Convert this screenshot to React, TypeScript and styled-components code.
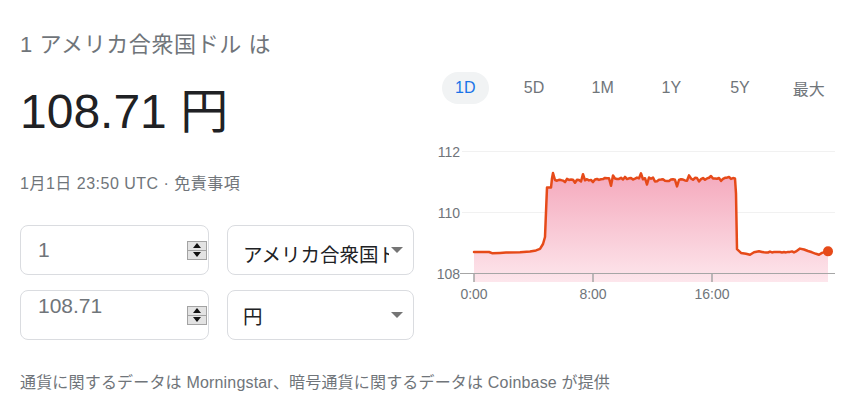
import React from "react";
import styled, { createGlobalStyle } from "styled-components";

const FONT = `"Liberation Sans", Arial, "Noto Sans CJK JP", sans-serif`;

const GlobalStyle = createGlobalStyle`
  html, body { margin: 0; padding: 0; background: #fff; }
  body { font-family: ${FONT}; }
`;

const Page = styled.div`
  width: 850px;
  height: 417px;
  box-sizing: border-box;
  padding: 30px 7px 0 20px;
  display: flex;
  flex-direction: column;
  font-family: ${FONT};
`;

const Title = styled.div`
  font-size: 22px;
  letter-spacing: 0.6px;
  line-height: 30px;
  height: 30px;
  color: #70757a;
  white-space: nowrap;
`;

const Main = styled.div`
  display: flex;
  gap: 17px;
`;

const LeftCol = styled.div`
  width: 394px;
  display: flex;
  flex-direction: column;
`;

const BigValue = styled.div`
  margin-top: 20px;
  font-size: 48px;
  line-height: 64px;
  height: 64px;
  color: #202124;
  white-space: nowrap;
`;

const Meta = styled.div`
  margin-top: 28px;
  font-size: 16px;
  letter-spacing: 0.5px;
  line-height: 24px;
  height: 24px;
  color: #70757a;
  white-space: nowrap;
`;

const Converter = styled.div`
  margin-top: 29px;
  display: grid;
  grid-template-columns: 189px 187px;
  grid-auto-rows: 50px;
  column-gap: 18px;
  row-gap: 15px;
`;

const NumberBox = styled.div`
  box-sizing: border-box;
  height: 50px;
  border: 1px solid #dadce0;
  border-radius: 8px;
  display: flex;
  align-items: center;
  padding: 0 1px 0 17px;
`;

const NumberInput = styled.input<{ $lift: number }>`
  flex: 1;
  min-width: 0;
  border: none;
  outline: none;
  background: transparent;
  padding: 0 0 ${(p) => p.$lift}px 0;
  margin: 0;
  font-family: ${FONT};
  font-size: 21px;
  line-height: 24px;
  color: #70757a;
`;

const Spinner = styled.div`
  box-sizing: border-box;
  width: 20px;
  height: 19px;
  border: 1px solid #a3a3a3;
  background: #e3e3e3;
  display: flex;
  flex-direction: column;
`;

const SpinHalf = styled.div`
  flex: 1;
  display: flex;
  align-items: center;
  justify-content: center;
  & + & {
    border-top: 1px solid #a3a3a3;
  }
`;

const Arrow = styled.span<{ $down?: boolean }>`
  width: 0;
  height: 0;
  border-left: 4.5px solid transparent;
  border-right: 4.5px solid transparent;
  ${(p) =>
    p.$down
      ? "border-top: 5px solid #111;"
      : "border-bottom: 5px solid #111;"}
`;

const SelectBox = styled.div`
  box-sizing: border-box;
  height: 50px;
  border: 1px solid #dadce0;
  border-radius: 8px;
  display: flex;
  align-items: center;
  padding: 0 10px 0 15px;
`;

const SelectText = styled.span<{ $drop: number }>`
  flex: 1;
  min-width: 0;
  overflow: hidden;
  white-space: nowrap;
  font-size: 19.5px;
  line-height: 24px;
  color: #202124;
  padding-top: ${(p) => p.$drop}px;
`;

const Caret = styled.span`
  width: 0;
  height: 0;
  margin-left: 2px;
  border-left: 6px solid transparent;
  border-right: 6px solid transparent;
  border-top: 6px solid #757575;
`;

const Footer = styled.div`
  margin-top: 31px;
  font-size: 16px;
  letter-spacing: 0.18px;
  line-height: 24px;
  color: #70757a;
  white-space: nowrap;
`;

const RightCol = styled.div`
  width: 412px;
  display: flex;
  flex-direction: column;
`;

const Tabs = styled.div`
  margin-top: 12px;
  display: grid;
  grid-template-columns: repeat(6, 1fr);
`;

const Tab = styled.div`
  display: flex;
  justify-content: center;
`;

const TabLabel = styled.span<{ $active?: boolean }>`
  width: 47px;
  height: 32px;
  border-radius: 16px;
  display: flex;
  align-items: center;
  justify-content: center;
  font-size: 16px;
  color: ${(p) => (p.$active ? "#1a73e8" : "#70757a")};
  background: ${(p) => (p.$active ? "#f1f3f4" : "transparent")};
`;

const ChartSvg = styled.svg`
  margin-top: 36px;
  display: block;
  overflow: visible;
`;

const AxisText = styled.text`
  font-family: ${FONT};
  font-size: 14px;
  fill: #70757a;
`;

/* ---------- chart data ---------- */
const OX = 431;
const yOf = (v: number) => 133 - (v - 108) * 30.5;

function rng(seed: number) {
  let s = seed;
  return () => {
    s = (s * 16807) % 2147483647;
    return (s - 1) / 2147483646;
  };
}

function buildPoints(): [number, number][] {
  const r = rng(11);
  const raw: [number, number][] = [
    [474, 108.69],
    [489, 108.69],
    [492, 108.65],
    [500, 108.66],
    [506, 108.67],
    [520, 108.68],
    [530, 108.7],
    [536, 108.74],
    [540, 108.79],
    [543, 108.95],
    [545, 109.18],
    [546, 110.0],
    [547, 110.8],
    [551, 110.8],
    [552, 111.1],
    [553, 111.28],
    [555, 111.05],
  ];
  const spikes: Record<number, number> = {
    565: 110.98,
    575: 110.96,
    581: 111.0,
    583: 111.24,
    593: 110.98,
    611: 110.86,
    613: 111.2,
    625: 111.15,
    641: 111.27,
    647: 110.9,
    655: 111.0,
    667: 111.02,
    677: 110.84,
    679: 111.05,
    689: 111.2,
    699: 111.0,
    711: 111.18,
    721: 111.02,
    729: 111.15,
  };
  for (let x = 557; x <= 733; x += 2) {
    const base = x < 600 ? 111.06 : x < 655 ? 111.1 : x < 690 ? 111.04 : 111.09;
    const v = spikes[x] ?? base + (r() - 0.5) * 0.07;
    raw.push([x, v]);
  }
  raw.push([735, 111.1], [736, 110.6], [737, 108.78], [741, 108.66], [746, 108.63], [750, 108.6], [754, 108.68], [759, 108.71]);
  for (let x = 762; x <= 796; x += 2) {
    raw.push([x, 108.69 + (r() - 0.5) * 0.04]);
  }
  raw.push([800, 108.8], [804, 108.77], [808, 108.72], [812, 108.68], [816, 108.63], [819, 108.6], [822, 108.66], [828, 108.71]);
  return raw.map(([gx, v]) => [gx - OX, yOf(v)]);
}

const POINTS = buildPoints();
const LINE = POINTS.map(([x, y], i) => `${i ? "L" : "M"}${x.toFixed(1)} ${y.toFixed(1)}`).join(" ");
const FIRST = POINTS[0];
const LAST = POINTS[POINTS.length - 1];
const AREA = `${LINE} L${LAST[0].toFixed(1)} 142 L${FIRST[0].toFixed(1)} 142 Z`;

const X_TICKS: [number, string][] = [
  [474 - OX, "0:00"],
  [593 - OX, "8:00"],
  [712 - OX, "16:00"],
];

function Chart() {
  return (
    <ChartSvg width={412} height={165} viewBox="0 0 412 165">
      <defs>
        <linearGradient id="fillGrad" x1="0" y1="30" x2="0" y2="142" gradientUnits="userSpaceOnUse">
          <stop offset="0" stopColor="#f4a7bb" />
          <stop offset="1" stopColor="#fde6ec" />
        </linearGradient>
      </defs>
      <line x1={31} x2={404} y1={11.5} y2={11.5} stroke="#f1f1f1" strokeWidth={1} />
      <line x1={31} x2={404} y1={72.5} y2={72.5} stroke="#f1f1f1" strokeWidth={1} />
      <AxisText x={29} y={12} textAnchor="end" dominantBaseline="central">112</AxisText>
      <AxisText x={29} y={73} textAnchor="end" dominantBaseline="central">110</AxisText>
      <AxisText x={29} y={134} textAnchor="end" dominantBaseline="central">108</AxisText>
      <path d={AREA} fill="url(#fillGrad)" />
      <line x1={29} x2={404} y1={133.5} y2={133.5} stroke="#a6a6a6" strokeWidth={1.2} />
      {X_TICKS.map(([x, label]) => (
        <g key={label}>
          <line x1={x} x2={x} y1={133} y2={142} stroke="#a6a6a6" strokeWidth={1.5} />
          <AxisText x={x} y={154} textAnchor="middle" dominantBaseline="central">
            {label}
          </AxisText>
        </g>
      ))}
      <path d={LINE} fill="none" stroke="#e64a19" strokeWidth={2.5} strokeLinejoin="round" strokeLinecap="round" />
      <circle cx={LAST[0]} cy={LAST[1]} r={5} fill="#e64a19" />
    </ChartSvg>
  );
}

function NumberField({ value, lift }: { value: string; lift: number }) {
  return (
    <NumberBox>
      <NumberInput type="text" value={value} readOnly $lift={lift} />
      <Spinner>
        <SpinHalf>
          <Arrow />
        </SpinHalf>
        <SpinHalf>
          <Arrow $down />
        </SpinHalf>
      </Spinner>
    </NumberBox>
  );
}

function CurrencySelect({ label, drop }: { label: string; drop: number }) {
  return (
    <SelectBox>
      <SelectText $drop={drop}>{label}</SelectText>
      <Caret />
    </SelectBox>
  );
}

const RANGES = ["1D", "5D", "1M", "1Y", "5Y", "最大"];

export default function App() {
  return (
    <>
      <GlobalStyle />
      <Page>
        <Title>1 アメリカ合衆国ドル は</Title>
        <Main>
          <LeftCol>
            <BigValue>108.71 円</BigValue>
            <Meta>1月1日 23:50 UTC · 免責事項</Meta>
            <Converter>
              <NumberField value="1" lift={0} />
              <CurrencySelect label="アメリカ合衆国ドル" drop={10} />
              <NumberField value="108.71" lift={18} />
              <CurrencySelect label="円" drop={4} />
            </Converter>
          </LeftCol>
          <RightCol>
            <Tabs>
              {RANGES.map((r, i) => (
                <Tab key={r}>
                  <TabLabel $active={i === 0}>{r}</TabLabel>
                </Tab>
              ))}
            </Tabs>
            <Chart />
          </RightCol>
        </Main>
        <Footer>通貨に関するデータは Morningstar、暗号通貨に関するデータは Coinbase が提供</Footer>
      </Page>
    </>
  );
}
